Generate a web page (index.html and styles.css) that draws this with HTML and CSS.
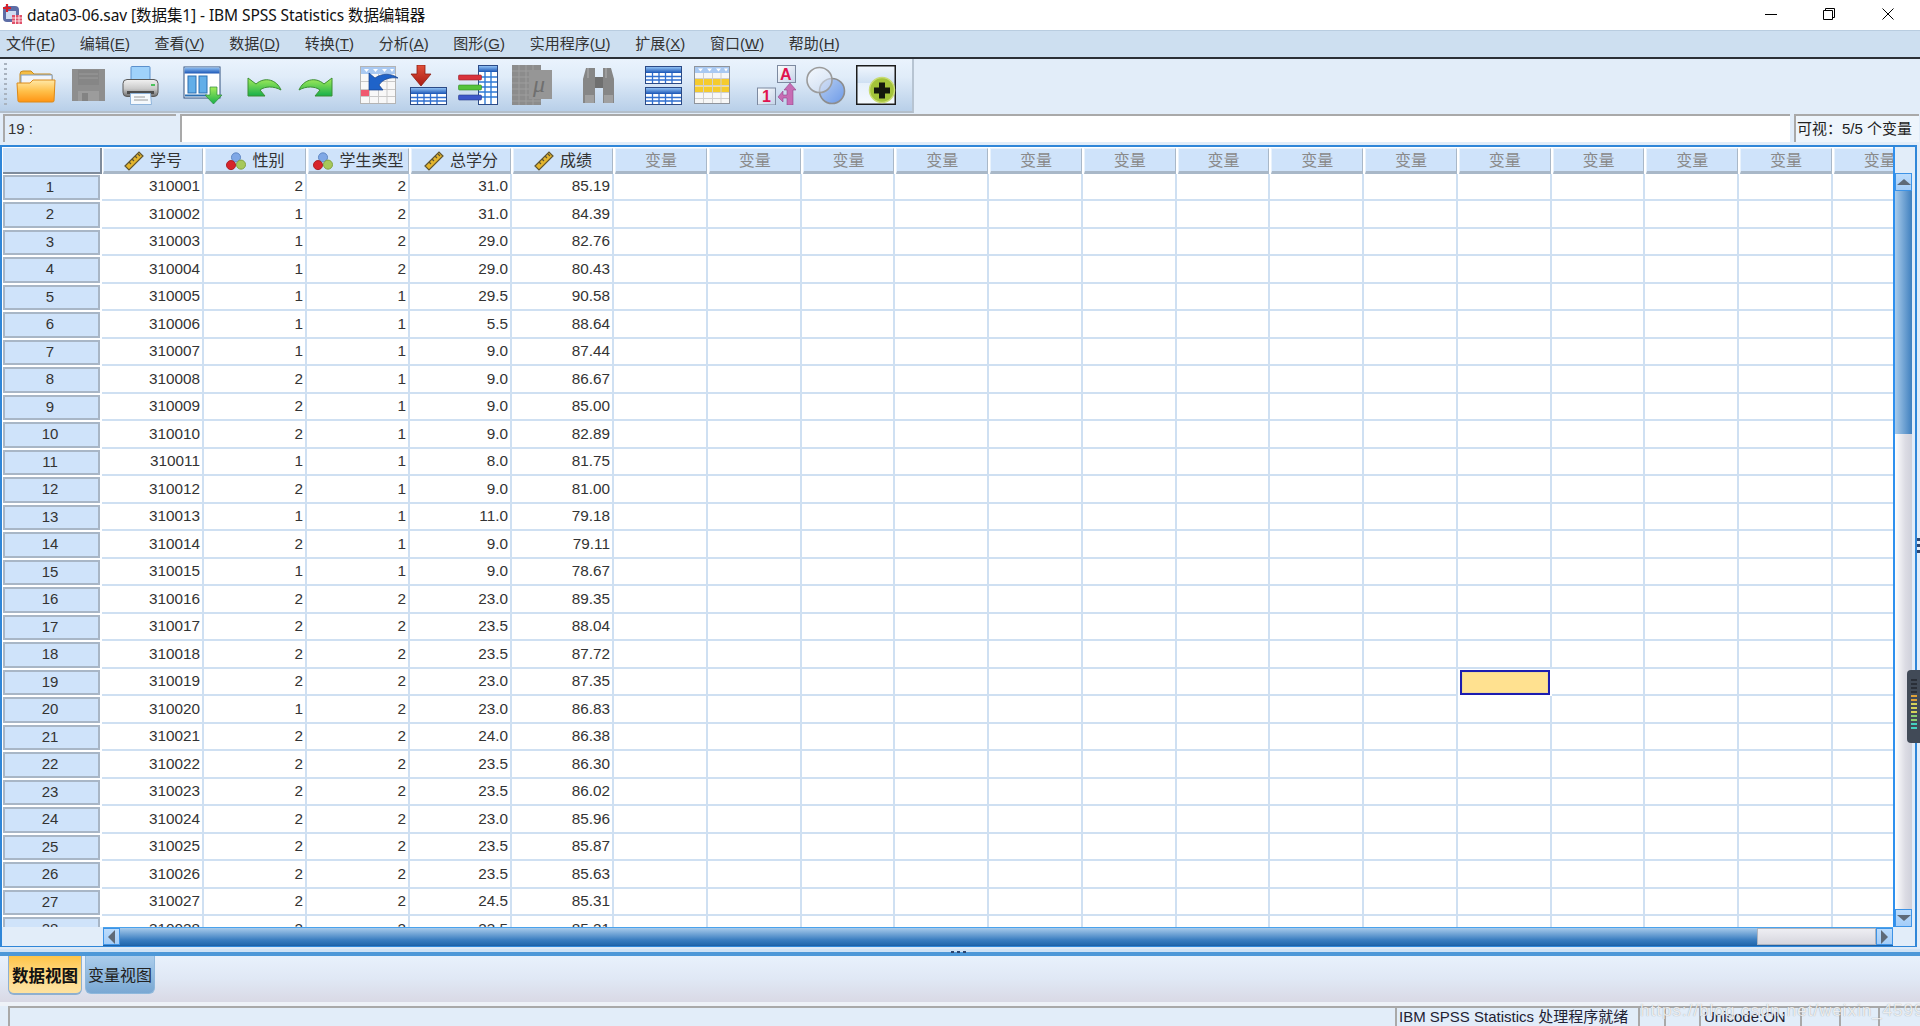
FILE: index.html
```html
<!DOCTYPE html>
<html lang="zh-CN">
<head>
<meta charset="utf-8">
<title>data03-06.sav [数据集1] - IBM SPSS Statistics 数据编辑器</title>
<link rel="stylesheet" href="styles.css">
</head>
<body>
<svg class="defs" aria-hidden="true">
  <defs>
    <linearGradient id="gFolder" x1="0" y1="0" x2="0" y2="1"><stop offset="0" stop-color="#ffe9a8"/><stop offset=".5" stop-color="#ffc04a"/><stop offset="1" stop-color="#ff9413"/></linearGradient>
    <linearGradient id="gBar" x1="0" y1="0" x2="0" y2="1"><stop offset="0" stop-color="#8fc0f4"/><stop offset="1" stop-color="#1a55b5"/></linearGradient>
    <linearGradient id="gGreen" x1="0" y1="0" x2="0" y2="1"><stop offset="0" stop-color="#a6ec5a"/><stop offset="1" stop-color="#17b04a"/></linearGradient>
    <linearGradient id="gPrinter" x1="0" y1="0" x2="0" y2="1"><stop offset="0" stop-color="#f2f2f2"/><stop offset=".55" stop-color="#c9c9c9"/><stop offset="1" stop-color="#6e6e6e"/></linearGradient>
    <linearGradient id="gRed" x1="0" y1="0" x2="0" y2="1"><stop offset="0" stop-color="#e2503a"/><stop offset="1" stop-color="#a81c14"/></linearGradient>
    <linearGradient id="gC1" x1="0" y1="0" x2="1" y2="1"><stop offset="0" stop-color="#ffffff"/><stop offset="1" stop-color="#cbd9f2"/></linearGradient>
    <linearGradient id="gC2" x1="0" y1="0" x2="1" y2="1"><stop offset="0" stop-color="#b9cff2"/><stop offset="1" stop-color="#6c9ae8"/></linearGradient>
    <linearGradient id="gKey" x1="0" y1="0" x2="1" y2="1"><stop offset="0" stop-color="#fff"/><stop offset="1" stop-color="#c4d3e8"/></linearGradient>
    <linearGradient id="gPlus" x1="0" y1="0" x2="0" y2="1"><stop offset="0" stop-color="#f0f6fd"/><stop offset=".45" stop-color="#cfe0f3"/><stop offset=".46" stop-color="#e6f0fb"/><stop offset="1" stop-color="#f4f9fe"/></linearGradient>
    <symbol id="ruler" viewBox="0 0 20 20">
      <path d="M1 15 15 1l4 4L5 19z" fill="#e3b52d" stroke="#5f5532" stroke-width="1.2"/>
      <path d="M5 11l2 2M8 8l2 2M11 5l2 2M14 3l2 2" stroke="#5f5532" stroke-width="1.2" fill="none"/>
    </symbol>
    <symbol id="balls" viewBox="0 0 22 20">
      <circle cx="11" cy="6" r="5" fill="#7fa8e6" stroke="#5c83c0"/>
      <circle cx="16.500" cy="14" r="5" fill="#a6c85a" stroke="#7f9e3a"/>
      <circle cx="5.500" cy="14.500" r="5" fill="#d7252b" stroke="#a81a1f"/>
    </symbol>
    <symbol id="blueTable" viewBox="0 0 37 18">
      <rect x=".5" y=".5" width="36" height="17" fill="#fff" stroke="#2b4a86"/>
      <rect x="1" y="1" width="35" height="6" fill="url(#gBar)"/>
      <path d="M1 10.500h35M1 14h35M7.500 7v10M14 7v10M20.500 7v10M27 7v10" stroke="#2f6fd0" stroke-width="1.300"/>
    </symbol>
  </defs>
</svg>

<header class="titlebar">
  <div class="title-left">
    <svg class="app-icon" viewBox="0 0 20 20" width="20" height="20">
      <rect x="1" y="2" width="16" height="16" rx="4" fill="#5d6da6"/>
      <rect x="4" y="7" width="10" height="8" fill="#cfdcf2"/>
      <path d="M5 0v8M1 4h8" stroke="#d8202a" stroke-width="2.200"/>
      <rect x="10" y="11" width="10" height="9" fill="#e0516a"/>
      <path d="M10 14h10M10 17h10M13.500 11v9M17 11v9" stroke="#fff" stroke-width=".8"/>
    </svg>
    <span class="title-text">data03-06.sav [数据集1] - IBM SPSS Statistics 数据编辑器</span>
  </div>
  <div class="win-controls">
    <button class="win-btn" aria-label="最小化"><svg width="12" height="12" viewBox="0 0 12 12"><path d="M0 6.500h12" stroke="#000"/></svg></button>
    <button class="win-btn" aria-label="还原"><svg width="12" height="12" viewBox="0 0 12 12"><path d="M.5 2.500h9v9h-9zM2.500 2.500v-2h9v9h-2" fill="none" stroke="#000"/></svg></button>
    <button class="win-btn" aria-label="关闭"><svg width="12" height="12" viewBox="0 0 12 12"><path d="M.5.500l11 11M11.500.500l-11 11" stroke="#000"/></svg></button>
  </div>
</header>

<nav class="menubar">
  <span class="menu">文件(<u>F</u>)</span>
  <span class="menu">编辑(<u>E</u>)</span>
  <span class="menu">查看(<u>V</u>)</span>
  <span class="menu">数据(<u>D</u>)</span>
  <span class="menu">转换(<u>T</u>)</span>
  <span class="menu">分析(<u>A</u>)</span>
  <span class="menu">图形(<u>G</u>)</span>
  <span class="menu">实用程序(<u>U</u>)</span>
  <span class="menu">扩展(<u>X</u>)</span>
  <span class="menu">窗口(<u>W</u>)</span>
  <span class="menu">帮助(<u>H</u>)</span>
</nav>

<div class="toolbar">
  <svg class="tool" viewBox="0 0 40 40"><path d="M4 9q0-3 3-3h8l3 3h16q2 0 2 2v9H4z" fill="#f4bd45" stroke="#c98a1c"/><rect x="5" y="10" width="31" height="11" fill="#f1f5fb" stroke="#7f9fc9"/><path d="M1 18h13l3-3h22l-1 21q0 1-2 1H4q-2 0-2-1z" fill="url(#gFolder)" stroke="#dc8a18"/></svg>
  <svg class="tool" viewBox="0 0 40 40"><path d="M3 4h33v32H3z" fill="#8e8e8e"/><path d="M9 5h21v15H9z" fill="#868686"/><path d="M10 9h19M10 13h19" stroke="#9b9b9b"/><path d="M9 26h21v10H9z" fill="#9c9c9c"/><rect x="13" y="28" width="6" height="8" fill="#838383"/></svg>
  <svg class="tool" viewBox="0 0 40 40"><rect x="11" y="1.500" width="19" height="15" rx="1" fill="#9fd2fb" stroke="#5b90cc"/><rect x="3" y="14.500" width="35" height="17" rx="4" fill="url(#gPrinter)" stroke="#5a5a5a"/><rect x="7" y="26" width="27" height="3" fill="#4d4d4d"/><rect x="31" y="19" width="4" height="2" fill="#49c35c"/><path d="M10.500 28.500h20l1 11h-21z" fill="#f5f9fd" stroke="#8fb4db"/><path d="M14 32h11M14 35h14" stroke="#9a9a9a"/></svg>
  <svg class="tool" viewBox="0 0 40 40"><rect x="1" y="2" width="36" height="31" fill="#fff" stroke="#31507f"/><rect x="1.500" y="2.500" width="35" height="6" fill="url(#gBar)"/><rect x="5" y="11" width="8" height="17" fill="#62aee8" stroke="#2a6fb2"/><rect x="16" y="11" width="8" height="17" fill="#62aee8" stroke="#2a6fb2"/><path d="M2 30.500h22" stroke="#2a6fb2" stroke-width="2"/><path d="M27 22h7v8h5L30.500 39 22 30h5z" fill="url(#gGreen)" stroke="#2d8a3c" stroke-width=".7"/></svg>
  <svg class="tool" viewBox="0 0 40 40"><path d="M3 13v18h17l-5-6c5-4 14-4 21 0-4-10-16-14-25-6z" fill="url(#gGreen)" stroke="#3d8f33"/></svg>
  <svg class="tool" viewBox="0 0 40 40"><path d="M37 13v18H20l5-6c-5-4-14-4-21 0 4-10 16-14 25-6z" fill="url(#gGreen)" stroke="#3d8f33"/></svg>
  <svg class="tool" viewBox="0 0 40 40"><rect x="2.500" y="1.500" width="35" height="37" fill="#f8f8f8" stroke="#b4b4b4"/><rect x="3" y="2" width="34" height="7" fill="#a9c9f2"/><path d="M6 4h5l-2.500 3zM15 4h5l-2.500 3zM24 4h5l-2.500 3zM32 4h4l-2 3z" fill="#fff"/><path d="M3 16.500h34M3 24.500h34M3 31.500h34M11.500 9v29M20.500 9v29M29 9v29" stroke="#c9c9c9"/><rect x="3" y="25" width="8" height="6" fill="#f0586e"/><path d="M11 8v17h14l-4-5c4-6 11-8 19-7-7-5-16-5-23 0z" fill="#1f63c9" stroke="#143f8a" stroke-width=".7"/></svg>
  <svg class="tool" viewBox="0 0 40 40"><path d="M7 0h8v9h6L11 21 1 9h6z" fill="url(#gRed)" stroke="#8c1c12" stroke-width=".8" transform="translate(1 0)"/><use href="#blueTable" x="1" y="22" width="37" height="18"/></svg>
  <svg class="tool" viewBox="0 0 40 40"><rect x="20.500" y=".5" width="19" height="39" fill="#fff" stroke="#2b4a86"/><rect x="21" y="1" width="18" height="6" fill="url(#gBar)"/><path d="M21 12h18M21 17h18M21 22h18M21 27h18M21 32h18M27 7v32M33 7v32" stroke="#2f7bd6" stroke-width="1.400"/><rect x="0.500" y="10" width="23" height="5" rx="1" fill="#d8323c" stroke="#97202a" stroke-width=".6"/><rect x="0.500" y="20" width="23" height="5" rx="1" fill="#55c23a" stroke="#348a24" stroke-width=".6"/><rect x="0.500" y="30" width="23" height="5" rx="1" fill="#3d57c9" stroke="#2a3c8c" stroke-width=".6"/></svg>
  <svg class="tool" viewBox="0 0 40 40"><rect x="0" y="0" width="29" height="40" fill="#8c8c8c"/><path d="M0 6h29M0 12h29M0 18h29M0 24h29M0 30h29M0 36h29M7 0v40M14 0v40M21 0v40" stroke="#9e9e9e"/><rect x="17" y="5" width="23" height="29" fill="#969696"/><text class="tool-mu" x="21" y="27">μ</text></svg>
  <svg class="tool" viewBox="0 0 40 40"><path d="M7 3h9v35H4V14z" fill="#868686"/><path d="M32 3h-8v35h11V14z" fill="#868686"/><rect x="16" y="12" width="8" height="11" fill="#6f6f6f"/><rect x="6" y="30" width="9" height="8" fill="#a0a0a0"/><rect x="25" y="30" width="9" height="8" fill="#a0a0a0"/><path d="M9 3v10M27 3v10" stroke="#9c9c9c" stroke-width="2"/></svg>
  <svg class="tool" viewBox="0 0 40 40"><use href="#blueTable" x="1" y="1" width="37" height="18"/><use href="#blueTable" x="1" y="22" width="37" height="18"/></svg>
  <svg class="tool" viewBox="0 0 40 40"><rect x="2.500" y="1.500" width="35" height="37" fill="#f7f7f7" stroke="#8f949c"/><rect x="3" y="2" width="34" height="6" fill="#a9c9f2"/><path d="M6 3.500h5L8.500 6.500zM15 3.500h5l-2.500 3zM24 3.500h5l-2.500 3zM32 3.500h4l-2 3z" fill="#fff"/><rect x="3" y="14" width="34" height="6" fill="#f5cb2d"/><rect x="3" y="21.500" width="34" height="6" fill="#f5cb2d"/><path d="M3 13.500h34M3 20.500h34M3 27.500h34M3 33.500h34M11.500 8v30M20.500 8v30M29 8v30" stroke="#cfcfcf"/></svg>
  <svg class="tool" viewBox="0 0 40 40"><rect x="21.500" y=".5" width="18" height="17" fill="url(#gKey)" stroke="#7d8aa0"/><text class="tool-key" x="24" y="15">A</text><rect x="1.500" y="23" width="18" height="17" fill="url(#gKey)" stroke="#7d8aa0"/><text class="tool-key" x="6" y="37">1</text><path d="M34 18l6 7h-3v15h-6v-7h-4v4l-5-5 5-6v4h4v-5h-3z" fill="#c76cb4" stroke="#92478a" stroke-width=".6"/></svg>
  <svg class="tool" viewBox="0 0 40 40"><circle cx="26" cy="26" r="12.500" fill="url(#gC2)" stroke="#8d8d8d" stroke-width="1.600"/><circle cx="13.500" cy="15" r="12.500" fill="url(#gC1)" fill-opacity=".55" stroke="#9b9b9b" stroke-width="1.600"/></svg>
  <svg class="tool" viewBox="0 0 40 40"><rect x=".75" y=".75" width="38.500" height="38.500" fill="url(#gPlus)" stroke="#1c1c1c" stroke-width="1.500"/><circle cx="26" cy="25" r="12.500" fill="#a4c43a" stroke="#c9dc74" stroke-width="1.500"/><path d="M23 17.500h6v5h5v6h-5v5h-6v-5h-5v-6h5z" fill="#15190d"/></svg>
</div>

<div class="cellbar">
  <div class="namebox">19 :</div>
  <div class="formula"></div>
  <div class="visible">可视：5/5 个变量</div>
</div>

<main class="frame">
  <div class="frame-top">
    <div class="sheet">
      <div class="corner"></div>
      <div class="colhead"><svg class="vicon"><use href="#ruler"/></svg>学号</div>
      <div class="colhead"><svg class="vicon"><use href="#balls"/></svg>性别</div>
      <div class="colhead"><svg class="vicon"><use href="#balls"/></svg>学生类型</div>
      <div class="colhead"><svg class="vicon"><use href="#ruler"/></svg>总学分</div>
      <div class="colhead"><svg class="vicon"><use href="#ruler"/></svg>成绩</div>
      <div class="colhead var">变量</div><div class="colhead var">变量</div><div class="colhead var">变量</div><div class="colhead var">变量</div><div class="colhead var">变量</div><div class="colhead var">变量</div><div class="colhead var">变量</div><div class="colhead var">变量</div><div class="colhead var">变量</div><div class="colhead var">变量</div><div class="colhead var">变量</div><div class="colhead var">变量</div><div class="colhead var">变量</div><div class="colhead var">变量</div>
      <div class="rowhead">1</div><span>310001</span><span>2</span><span>2</span><span>31.0</span><span>85.19</span><p></p><p></p><p></p><p></p><p></p><p></p><p></p><p></p><p></p><p></p><p></p><p></p><p></p><p></p>
      <div class="rowhead">2</div><span>310002</span><span>1</span><span>2</span><span>31.0</span><span>84.39</span><p></p><p></p><p></p><p></p><p></p><p></p><p></p><p></p><p></p><p></p><p></p><p></p><p></p><p></p>
      <div class="rowhead">3</div><span>310003</span><span>1</span><span>2</span><span>29.0</span><span>82.76</span><p></p><p></p><p></p><p></p><p></p><p></p><p></p><p></p><p></p><p></p><p></p><p></p><p></p><p></p>
      <div class="rowhead">4</div><span>310004</span><span>1</span><span>2</span><span>29.0</span><span>80.43</span><p></p><p></p><p></p><p></p><p></p><p></p><p></p><p></p><p></p><p></p><p></p><p></p><p></p><p></p>
      <div class="rowhead">5</div><span>310005</span><span>1</span><span>1</span><span>29.5</span><span>90.58</span><p></p><p></p><p></p><p></p><p></p><p></p><p></p><p></p><p></p><p></p><p></p><p></p><p></p><p></p>
      <div class="rowhead">6</div><span>310006</span><span>1</span><span>1</span><span>5.5</span><span>88.64</span><p></p><p></p><p></p><p></p><p></p><p></p><p></p><p></p><p></p><p></p><p></p><p></p><p></p><p></p>
      <div class="rowhead">7</div><span>310007</span><span>1</span><span>1</span><span>9.0</span><span>87.44</span><p></p><p></p><p></p><p></p><p></p><p></p><p></p><p></p><p></p><p></p><p></p><p></p><p></p><p></p>
      <div class="rowhead">8</div><span>310008</span><span>2</span><span>1</span><span>9.0</span><span>86.67</span><p></p><p></p><p></p><p></p><p></p><p></p><p></p><p></p><p></p><p></p><p></p><p></p><p></p><p></p>
      <div class="rowhead">9</div><span>310009</span><span>2</span><span>1</span><span>9.0</span><span>85.00</span><p></p><p></p><p></p><p></p><p></p><p></p><p></p><p></p><p></p><p></p><p></p><p></p><p></p><p></p>
      <div class="rowhead">10</div><span>310010</span><span>2</span><span>1</span><span>9.0</span><span>82.89</span><p></p><p></p><p></p><p></p><p></p><p></p><p></p><p></p><p></p><p></p><p></p><p></p><p></p><p></p>
      <div class="rowhead">11</div><span>310011</span><span>1</span><span>1</span><span>8.0</span><span>81.75</span><p></p><p></p><p></p><p></p><p></p><p></p><p></p><p></p><p></p><p></p><p></p><p></p><p></p><p></p>
      <div class="rowhead">12</div><span>310012</span><span>2</span><span>1</span><span>9.0</span><span>81.00</span><p></p><p></p><p></p><p></p><p></p><p></p><p></p><p></p><p></p><p></p><p></p><p></p><p></p><p></p>
      <div class="rowhead">13</div><span>310013</span><span>1</span><span>1</span><span>11.0</span><span>79.18</span><p></p><p></p><p></p><p></p><p></p><p></p><p></p><p></p><p></p><p></p><p></p><p></p><p></p><p></p>
      <div class="rowhead">14</div><span>310014</span><span>2</span><span>1</span><span>9.0</span><span>79.11</span><p></p><p></p><p></p><p></p><p></p><p></p><p></p><p></p><p></p><p></p><p></p><p></p><p></p><p></p>
      <div class="rowhead">15</div><span>310015</span><span>1</span><span>1</span><span>9.0</span><span>78.67</span><p></p><p></p><p></p><p></p><p></p><p></p><p></p><p></p><p></p><p></p><p></p><p></p><p></p><p></p>
      <div class="rowhead">16</div><span>310016</span><span>2</span><span>2</span><span>23.0</span><span>89.35</span><p></p><p></p><p></p><p></p><p></p><p></p><p></p><p></p><p></p><p></p><p></p><p></p><p></p><p></p>
      <div class="rowhead">17</div><span>310017</span><span>2</span><span>2</span><span>23.5</span><span>88.04</span><p></p><p></p><p></p><p></p><p></p><p></p><p></p><p></p><p></p><p></p><p></p><p></p><p></p><p></p>
      <div class="rowhead">18</div><span>310018</span><span>2</span><span>2</span><span>23.5</span><span>87.72</span><p></p><p></p><p></p><p></p><p></p><p></p><p></p><p></p><p></p><p></p><p></p><p></p><p></p><p></p>
      <div class="rowhead">19</div><span>310019</span><span>2</span><span>2</span><span>23.0</span><span>87.35</span><p></p><p></p><p></p><p></p><p></p><p></p><p></p><p></p><p></p><p class="selected"></p><p></p><p></p><p></p><p></p>
      <div class="rowhead">20</div><span>310020</span><span>1</span><span>2</span><span>23.0</span><span>86.83</span><p></p><p></p><p></p><p></p><p></p><p></p><p></p><p></p><p></p><p></p><p></p><p></p><p></p><p></p>
      <div class="rowhead">21</div><span>310021</span><span>2</span><span>2</span><span>24.0</span><span>86.38</span><p></p><p></p><p></p><p></p><p></p><p></p><p></p><p></p><p></p><p></p><p></p><p></p><p></p><p></p>
      <div class="rowhead">22</div><span>310022</span><span>2</span><span>2</span><span>23.5</span><span>86.30</span><p></p><p></p><p></p><p></p><p></p><p></p><p></p><p></p><p></p><p></p><p></p><p></p><p></p><p></p>
      <div class="rowhead">23</div><span>310023</span><span>2</span><span>2</span><span>23.5</span><span>86.02</span><p></p><p></p><p></p><p></p><p></p><p></p><p></p><p></p><p></p><p></p><p></p><p></p><p></p><p></p>
      <div class="rowhead">24</div><span>310024</span><span>2</span><span>2</span><span>23.0</span><span>85.96</span><p></p><p></p><p></p><p></p><p></p><p></p><p></p><p></p><p></p><p></p><p></p><p></p><p></p><p></p>
      <div class="rowhead">25</div><span>310025</span><span>2</span><span>2</span><span>23.5</span><span>85.87</span><p></p><p></p><p></p><p></p><p></p><p></p><p></p><p></p><p></p><p></p><p></p><p></p><p></p><p></p>
      <div class="rowhead">26</div><span>310026</span><span>2</span><span>2</span><span>23.5</span><span>85.63</span><p></p><p></p><p></p><p></p><p></p><p></p><p></p><p></p><p></p><p></p><p></p><p></p><p></p><p></p>
      <div class="rowhead">27</div><span>310027</span><span>2</span><span>2</span><span>24.5</span><span>85.31</span><p></p><p></p><p></p><p></p><p></p><p></p><p></p><p></p><p></p><p></p><p></p><p></p><p></p><p></p>
      <div class="rowhead">28</div><span>310028</span><span>2</span><span>2</span><span>23.5</span><span>85.21</span><p></p><p></p><p></p><p></p><p></p><p></p><p></p><p></p><p></p><p></p><p></p><p></p><p></p><p></p>
    </div>
    <div class="vscroll">
      <div class="vs-top"></div>
      <div class="sb-btn"><i class="arrow up"></i></div>
      <div class="vs-track"></div>
      <div class="vs-thumb"></div>
      <div class="sb-btn"><i class="arrow down"></i></div>
    </div>
  </div>
  <div class="hscroll-row">
    <div class="hs-left"></div>
    <div class="hscroll">
      <div class="sb-btn side"><i class="arrow left"></i></div>
      <div class="hs-track"></div>
      <div class="hs-thumb"></div>
      <div class="sb-btn side"><i class="arrow right"></i></div>
    </div>
  </div>
</main>

<div class="splitter"><div class="grip"></div></div>

<div class="tabs">
  <div class="tab active">数据视图</div>
  <div class="tab">变量视图</div>
</div>

<footer class="statusbar">
  <div class="st st-main"></div>
  <div class="st st-ready">IBM SPSS Statistics 处理程序就绪</div>
  <div class="st st-a"></div>
  <div class="st st-b"></div>
  <div class="st st-uni">Unicode:ON</div>
  <div class="st st-c"></div>
  <div class="st st-c"></div>
  <div class="st st-d"></div>
</footer>

<div class="side-meter">
  <i class="m1"></i><i class="m1"></i><i class="m1"></i><i class="m1"></i><i class="m2"></i><i class="m2"></i><i class="m3"></i><i class="m3"></i><i class="m3"></i><i class="m4"></i><i class="m4"></i><i class="m5"></i><i class="m5"></i>
</div>
<div class="side-grip"></div>
<div class="watermark">https://blog.csdn.net/weixin_45990326</div>
</body>
</html>
```
FILE: styles.css
```css
* { box-sizing: border-box; }
html, body { margin: 0; height: 100%; }
body {
  width: 1920px;
  height: 1026px;
  overflow: hidden;
  display: flex;
  flex-direction: column;
  position: relative;
  background: #e2edf9;
  color: #222;
  font: 15px/1 "Liberation Sans", "Noto Sans CJK SC", sans-serif;
}
.defs { position: absolute; width: 0; height: 0; }

/* title */
.titlebar {
  height: 30px;
  flex: none;
  background: #fff;
  display: flex;
  justify-content: space-between;
  align-items: center;
}
.title-left { display: flex; align-items: center; padding-left: 2px; gap: 5px; }
.app-icon { display: block; margin-top: -2px; }
.title-text { font: 15.500px "Noto Sans", "Noto Sans CJK SC", sans-serif; color: #111; margin-top: -2px; letter-spacing: -.08px; }
.win-controls { display: flex; padding-right: 3px; margin-top: -3px; }
.win-btn { width: 58.500px; height: 24px; border: 0; background: none; padding: 0; display: flex; align-items: center; justify-content: center; }

/* menu */
.menubar {
  height: 29px;
  flex: none;
  display: flex;
  gap: 24.700px;
  align-items: center;
  padding: 0 0 2px 6px;
  background: #cddff0;
  border-top: 1px solid #b9cde0;
  border-bottom: 2px solid #2b3036;
  color: #333;
}
.menu { white-space: nowrap; }

/* toolbar */
.toolbar {
  width: 914px;
  height: 54px;
  flex: none;
  display: grid;
  grid-template-columns: 53px 51px 63px 62px 50px 63px 51px 49px 54px 67px 65px 48px 64px 50px 50px 40px;
  align-items: start;
  padding: 6px 0 0 16px;
  background: linear-gradient(#eaf3fd, #e0ecf9 35%, #b8cfe8);
  border-right: 2px solid #b7c4d2;
  border-bottom: 2px solid #b3bfcb;
  position: relative;
}
.toolbar::before {
  content: "";
  position: absolute;
  left: 4px;
  top: 4px;
  bottom: 3px;
  width: 3px;
  background: repeating-linear-gradient(#a9b3bf 0 2px, transparent 2px 5px);
}
.tool { width: 40px; height: 40px; display: block; }
.tool-mu { font: italic 24px "Liberation Serif", serif; fill: #6f6f6f; }
.tool-key { font: bold 16px "Liberation Sans", sans-serif; fill: #e0144f; }

/* cell bar */
.cellbar { height: 32px; flex: none; display: flex; padding: 1px 1px 3px 3px; }
.namebox, .formula, .visible {
  border-top: 2px solid #a9a9a9;
  border-left: 2px solid #a9a9a9;
  display: flex;
  align-items: center;
  padding-bottom: 1px;
}
.namebox { width: 173px; padding-left: 3px; background: #e2edf9; color: #333; }
.formula { width: 1610px; margin-left: 4px; background: #fff; }
.visible { flex: 1; margin-left: 4px; padding-left: 1px; background: #eef5fc; color: #222; white-space: nowrap; }

/* data frame */
.frame {
  height: 802px;
  flex: none;
  width: 1917px;
  display: flex;
  flex-direction: column;
  border: 2px solid #2f86d8;
  border-bottom-width: 1px;
}
.frame-top { display: flex; height: 780px; flex: none; }
.sheet {
  width: 1891px;
  flex: none;
  overflow: hidden;
  display: grid;
  grid-template-columns: 100px 102px 103px 103px 102px 102px repeat(14, 93.770px);
  grid-template-rows: 26.500px;
  grid-auto-rows: 27.500px;
  background: #fff;
}
.sheet > span, .sheet > p {
  margin: 0;
  border-right: 2px solid #cfe0f2;
  border-bottom: 2px solid #cfe0f2;
}
.sheet > span {
  display: flex;
  align-items: center;
  justify-content: flex-end;
  padding: 0 2px 1px 0;
  font-size: 15.300px;
  color: #333;
}
.sheet > p.selected {
  background: #ffe190;
  border: 2px solid #1c1cb0;
  box-shadow: inset 0 0 0 1px #eed897;
  margin: 1.500px 2px 1px 2px;
}
.corner {
  margin: 1px 0 0 1px;
  background: #cfe3fa;
  border-right: 2px solid #7f8c9c;
  border-bottom: 2px solid #7f8c9c;
}
.colhead {
  margin: 1px 1px 0 1px;
  background: #cfe3fa;
  border-top: 1px solid #e8f2fc;
  border-left: 1px solid #e8f2fc;
  border-right: 1px solid #a9b8c8;
  border-bottom: 3px solid #a9b8c8;
  display: flex;
  align-items: center;
  justify-content: center;
  gap: 6px;
  padding-top: 2px;
  font-size: 16px;
  color: #333;
  white-space: nowrap;
}
.colhead.var { color: #8a8a8a; }
.vicon { width: 20px; height: 20px; flex: none; }
.rowhead {
  margin: 1px 2px 1px 1px;
  background: #cfe3fa;
  border: 2px solid #a8b6c6;
  display: flex;
  align-items: center;
  justify-content: center;
  padding: 0 3px 2px 0;
  color: #333;
}
.vscroll {
  flex: 1;
  display: flex;
  flex-direction: column;
  border-left: 2px solid #2f90ee;
  border-right: 3px solid #e2edf9;
  width: 22px;
  background: #e2edf9;
}
.vs-top { height: 26px; flex: none; background: #e2edf9; }
.sb-btn {
  height: 18px;
  flex: none;
  background: linear-gradient(#bcdcfc, #a4cdf8);
  border: 1px solid #3d93e6;
  display: flex;
  align-items: center;
  justify-content: center;
}
.sb-btn.side { width: 17px; height: auto; }
.arrow { display: block; width: 0; height: 0; border: 5px solid transparent; }
.arrow.up { border-bottom: 6px solid #5e6a78; border-top: 0; border-left-width: 7px; border-right-width: 7px; }
.arrow.down { border-top: 6px solid #5e6a78; border-bottom: 0; border-left-width: 7px; border-right-width: 7px; }
.arrow.left { border-right: 7px solid #5e6a78; border-left: 0; border-top-width: 7px; border-bottom-width: 7px; }
.arrow.right { border-left: 7px solid #5e6a78; border-right: 0; border-top-width: 7px; border-bottom-width: 7px; }
.vs-track { height: 243px; flex: none; background: linear-gradient(90deg, #a8cbeb, #3f7fbe); }
.vs-thumb { flex: 1; background: linear-gradient(90deg, #fff, #dcdce4 60%, #cfd0da); }
.hscroll-row { flex: 1; display: flex; background: #e2edf9; padding-right: 22px; }
.hs-left { width: 101px; flex: none; }
.hscroll { flex: 1; display: flex; border-top: 1px solid #4aa2ec; border-bottom: 1px solid #1f62a8; }
.hs-track { flex: 1; background: linear-gradient(#a8cbeb, #3a7dc0 70%, #2268ae); }
.hs-thumb { width: 119px; flex: none; background: linear-gradient(#eeeef3, #d6d6de); border: 1px solid #aeb4bf; }

/* splitter */
.splitter {
  height: 9px;
  flex: none;
  background: linear-gradient(#dce9f7 0 2px, #cfe2f5 2px 5px, #4d98d8 5px 9px);
  display: flex;
  justify-content: center;
  align-items: flex-start;
  padding-top: 4px;
}
.grip { width: 18px; height: 2px; background: repeating-linear-gradient(90deg, #2c4670 0 3px, transparent 3px 6px); }

/* tabs */
.tabs {
  height: 50px;
  flex: none;
  display: flex;
  gap: 3px;
  padding-left: 8px;
  background: linear-gradient(#e8f1fc, #e0e8f5 50%, #d9d9e5);
  border-bottom: 4px solid #eef2f8;
}
.tab {
  width: 70px;
  height: 38px;
  display: flex;
  align-items: center;
  justify-content: center;
  background: linear-gradient(#abcdec, #7aa8d3);
  border-radius: 0 0 6px 6px;
  border: 1px solid #8fb8dc;
  border-top: 0;
  padding-top: 2px;
  font-size: 16px;
  color: #222;
  white-space: nowrap;
}
.tab.active {
  width: 74px;
  height: 39px;
  background: linear-gradient(#fec448, #fedb8a 55%, #fee2a0);
  border-color: #8fb0d0;
  border-bottom-width: 2px;
  font-size: 16.500px;
  font-weight: bold;
  color: #111;
  padding: 4px 0 0;
}

/* status */
.statusbar { flex: 1; display: flex; padding-left: 8px; background: #e2edf9; }
.st { border-top: 2px solid #a9a9a9; border-left: 2px solid #a9a9a9; display: flex; align-items: center; white-space: nowrap; color: #223; padding: 0 0 2px 2px; }
.st-main { width: 1387px; }
.st-ready { width: 243px; }
.st-a { width: 26px; }
.st-b { width: 35px; }
.st-uni { width: 101px; padding-left: 3px; }
.st-c { width: 39px; }
.st-d { flex: 1; }

/* overlays */
.side-meter {
  position: absolute;
  left: 1907px;
  top: 670px;
  width: 13px;
  height: 73px;
  background: #414a57;
  border-radius: 4px 0 0 4px;
  padding: 9px 0 0 4px;
  display: flex;
  flex-direction: column;
  gap: 2px;
}
.side-meter i { display: block; width: 6px; height: 2px; }
.m1 { background: #2a2f38; }
.m2 { background: #e0a33a; }
.m3 { background: #d6d35a; }
.m4 { background: #8ccf72; }
.m5 { background: #45d0c0; }
.side-grip {
  position: absolute;
  left: 1917px;
  top: 538px;
  width: 3px;
  height: 16px;
  background: repeating-linear-gradient(#2c4670 0 3px, transparent 3px 6px);
}
.watermark {
  position: absolute;
  left: 1640px;
  top: 1002px;
  font-size: 17px;
  letter-spacing: 1px;
  color: rgba(255, 255, 255, .82);
  text-shadow: 0 0 1px rgba(90, 90, 90, .6);
  white-space: nowrap;
}
```
